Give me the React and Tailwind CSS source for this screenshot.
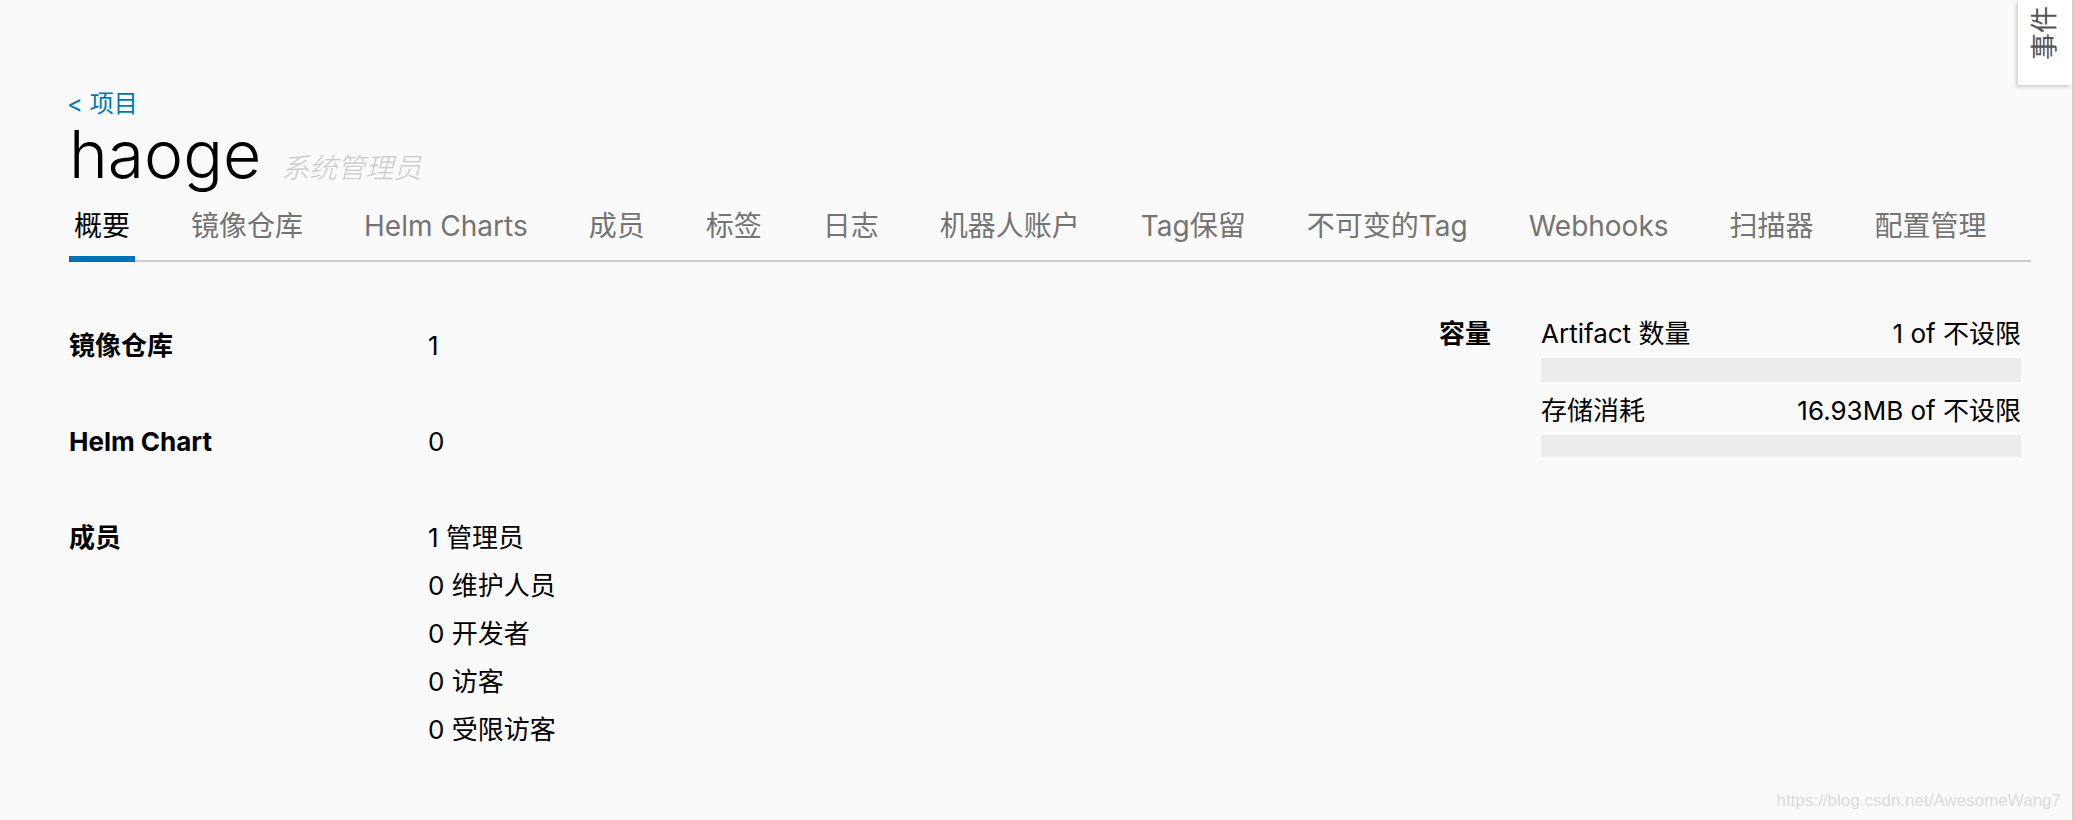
import React from "react";

const tabs = ["概要", "镜像仓库", "Helm Charts", "成员", "标签", "日志", "机器人账户", "Tag保留", "不可变的Tag", "Webhooks", "扫描器", "配置管理"];

const members = ["1 管理员", "0 维护人员", "0 开发者", "0 访客", "0 受限访客"];

function SummaryRow({ label, children }) {
  return (
    <div className="grid grid-cols-[359px_auto]">
      <div className="text-[26px] leading-[48px] font-bold text-black">{label}</div>
      <div className="text-[26px] leading-[48px] text-black">{children}</div>
    </div>
  );
}

function QuotaItem({ name, value, barClass }) {
  return (
    <div>
      <div className="flex justify-between text-[26px] leading-[36px] text-black">
        <span>{name}</span>
        <span>{value}</span>
      </div>
      <div className={"mt-[6px] bg-[#ececec] " + barClass} />
    </div>
  );
}

export default function App() {
  return (
    <div
      className="relative h-[820px] w-full overflow-hidden bg-[#fafafa] border-r-2 border-[#cfcfcf]"
      style={{ fontFamily: "Inter, 'Noto Sans CJK SC', sans-serif" }}
    >
      <div className="pt-[86px] pl-[69px] pr-[41px]">
        <a className="block -ml-[2px] text-[24px] leading-[36px] text-[#0079b8]">&lt; 项目</a>
        <div className="flex items-baseline gap-[20px] -mt-[1px]">
          <h1 className="text-[66px] leading-[66px] font-light text-black">haoge</h1>
          <span className="text-[28px] italic font-light text-[#cbcbcb]">系统管理员</span>
        </div>

        {/* tabs */}
        <nav className="flex gap-[51px] border-b-2 border-[#cccccc]">
          {tabs.map((t, i) => (
            <div
              key={t}
              className={
                "-mb-[2px] px-[5px] pt-[19px] pb-[12px] border-b-[6px] text-[28px] leading-[36px] " +
                (i === 0 ? "border-[#0072b8] text-black" : "border-transparent text-[#747474]")
              }
            >
              {t}
            </div>
          ))}
        </nav>

        <div className="mt-[54px] flex justify-between pr-[10px]">
          <div className="pt-[6px] flex flex-col gap-[48px]">
            <SummaryRow label="镜像仓库">1</SummaryRow>
            <SummaryRow label="Helm Chart">0</SummaryRow>
            <SummaryRow label="成员">
              {members.map((m) => (
                <div key={m}>{m}</div>
              ))}
            </SummaryRow>
          </div>

          <div className="flex gap-[50px]">
            <div className="text-[26px] leading-[36px] font-bold text-black">容量</div>
            <div className="w-[480px]">
              <QuotaItem name="Artifact 数量" value="1 of 不设限" barClass="h-[24px]" />
              <div className="mt-[11px]">
                <QuotaItem name="存储消耗" value="16.93MB of 不设限" barClass="h-[22px]" />
              </div>
            </div>
          </div>
        </div>
      </div>

      {/* events side toggle */}
      <div className="absolute top-0 right-0 w-[54px] h-[85px] bg-white shadow-[-2px_2px_4px_rgba(0,0,0,0.18)] flex justify-center pt-[2px]">
        <span className="text-[27px] leading-[28px] text-[#555555] [writing-mode:vertical-rl] [text-orientation:sideways] rotate-180 h-[58px]">
          事件
        </span>
      </div>

      <div
        className="absolute right-[11px] bottom-[7px] text-[17px] text-[#dadada]"
        style={{ fontFamily: "'Liberation Sans', Arial, sans-serif" }}
      >
        https://blog.csdn.net/AwesomeWang7
      </div>
    </div>
  );
}
